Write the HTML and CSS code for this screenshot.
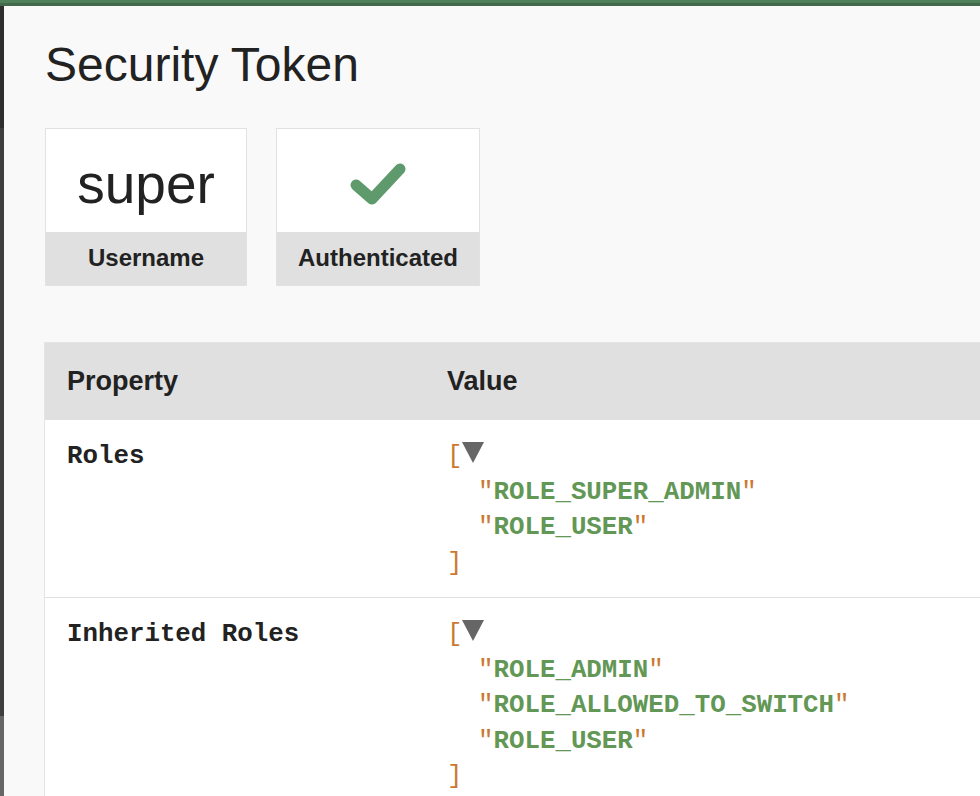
FILE: index.html
```html
<!DOCTYPE html>
<html>
<head>
<meta charset="utf-8">
<link rel="stylesheet" href="styles.css">
</head>
<body>
<div class="topbar"></div>
<div class="layout">
  <div class="sidebar">
    <div class="sb sb-1"></div>
    <div class="sb sb-2"></div>
    <div class="sb sb-3"></div>
  </div>
  <main class="content">
    <h2 class="title">Security Token</h2>
    <div class="metrics">
      <div class="metric">
        <div class="metric-value">super</div>
        <div class="metric-label">Username</div>
      </div>
      <div class="metric">
        <div class="metric-value metric-icon">
          <svg width="60" height="46" viewBox="0 0 60 46"><path d="M8 26 L24 40 L52 10" fill="none" stroke="#5e9a6c" stroke-width="11" stroke-linecap="round" stroke-linejoin="round"/></svg>
        </div>
        <div class="metric-label">Authenticated</div>
      </div>
    </div>
    <div class="table-wrap">
      <table class="props">
        <thead>
          <tr><th class="col-key">Property</th><th>Value</th></tr>
        </thead>
        <tbody>
          <tr>
            <th class="key">Roles</th>
            <td class="val"><div class="dump"><span class="br">[</span><span class="toggle"></span>
<div class="item"><span class="q">"</span><span class="s">ROLE_SUPER_ADMIN</span><span class="q">"</span></div><div class="item"><span class="q">"</span><span class="s">ROLE_USER</span><span class="q">"</span></div><span class="br">]</span></div></td>
          </tr>
          <tr>
            <th class="key">Inherited Roles</th>
            <td class="val"><div class="dump"><span class="br">[</span><span class="toggle"></span>
<div class="item"><span class="q">"</span><span class="s">ROLE_ADMIN</span><span class="q">"</span></div><div class="item"><span class="q">"</span><span class="s">ROLE_ALLOWED_TO_SWITCH</span><span class="q">"</span></div><div class="item"><span class="q">"</span><span class="s">ROLE_USER</span><span class="q">"</span></div><span class="br">]</span></div></td>
          </tr>
        </tbody>
      </table>
    </div>
  </main>
</div>
</body>
</html>
```

FILE: styles.css
```css
html, body {
  margin: 0;
  padding: 0;
  height: 100%;
  overflow: hidden;
}
body {
  background: #f9f9f9;
  color: #222;
  font-family: "Liberation Sans", Arial, sans-serif;
}
.topbar {
  height: 6px;
  background: linear-gradient(#50805a 0, #50805a 3px, #42694b 3px, #42694b 6px);
}
.layout {
  display: flex;
  height: calc(100% - 6px);
}
.sidebar {
  width: 4px;
  flex: none;
  display: flex;
  flex-direction: column;
}
.sb-1 { height: 122px; background: #2e2e2e; }
.sb-2 { height: 588px; background: #3e3e3e; }
.sb-3 { flex: 1; background: #666; }
.content {
  flex: 1;
  min-width: 0;
  padding: 31px 0 0 41px;
}
.title {
  margin: 0 0 35px;
  font-size: 48px;
  font-weight: normal;
  line-height: 56px;
  color: #222;
}
.metrics {
  display: flex;
  gap: 29px;
  margin-bottom: 56px;
}
.metric {
  border: 1px solid #e2e2e2;
  background: #fff;
  min-width: 200px;
  display: flex;
  flex-direction: column;
}
.metric-value {
  height: 95px;
  padding-top: 8px;
  line-height: 95px;
  font-size: 55px;
  text-align: center;
  color: #222;
}
.metric-icon {
  display: flex;
  align-items: center;
  justify-content: center;
  padding-top: 2px;
  height: 101px;
}
.metric-label {
  background: #e0e0e0;
  height: 53px;
  line-height: 52px;
  font-size: 24px;
  font-weight: bold;
  text-align: center;
  padding: 0 21px;
  color: #222;
}
.table-wrap {
  margin-left: -1px;
  width: 1100px;
}
.props {
  width: 100%;
  border-collapse: collapse;
  background: #fff;
  border: 1px solid #e4e4e4;
}
.props thead th {
  background: #e0e0e0;
  height: 77px;
  padding: 0 22px;
  text-align: left;
  font-size: 27px;
  font-weight: bold;
  color: #222;
  vertical-align: middle;
}
.props .col-key {
  width: 336px;
}
.props tbody tr + tr {
  border-top: 1px solid #e0e0e0;
}
.props tbody th,
.props tbody td {
  padding: 19px 22px 16px;
  vertical-align: top;
  text-align: left;
}
.key,
.dump {
  font-family: "Liberation Mono", "Courier New", monospace;
  font-size: 25.8px;
  line-height: 35.5px;
  font-weight: bold;
}
.key {
  color: #222;
}
.br {
  color: #cc7832;
  font-weight: normal;
}
.toggle {
  display: inline-block;
  width: 0;
  height: 0;
  border-left: 11px solid transparent;
  border-right: 11px solid transparent;
  border-top: 21px solid #666;
}
.item {
  padding-left: 31px;
}
.q {
  color: #cc7832;
  font-weight: normal;
}
.s {
  color: #629755;
}
```
